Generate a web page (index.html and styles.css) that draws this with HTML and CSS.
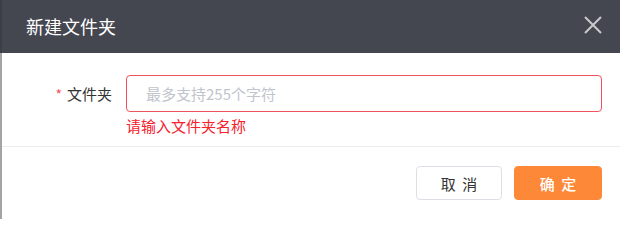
FILE: index.html
```html
<!DOCTYPE html>
<html lang="zh-CN">
<head>
<meta charset="utf-8">
<title>新建文件夹</title>
<link rel="stylesheet" href="styles.css">
</head>
<body>
<div class="dialog">
  <header class="dialog-header">
    <span class="dialog-title">新建文件夹</span>
    <button class="close-btn" aria-label="关闭">
      <svg width="20" height="20" viewBox="0 0 20 20"><path d="M2 2 L18 18 M18 2 L2 18" stroke="#c9cacd" stroke-width="2" fill="none"/></svg>
    </button>
  </header>
  <div class="dialog-main">
    <div class="dialog-body">
      <div class="form-row">
        <label class="form-label"><span class="req">*</span>文件夹</label>
        <div class="form-control">
          <input class="text-input" type="text" placeholder="最多支持255个字符">
          <div class="form-error">请输入文件夹名称</div>
        </div>
      </div>
    </div>
    <div class="dialog-footer">
      <button class="btn btn-default">取 消</button>
      <button class="btn btn-primary">确 定</button>
    </div>
  </div>
</div>
</body>
</html>
```
FILE: styles.css
```css
html, body {
  margin: 0;
  padding: 0;
  background: #ffffff;
}
body {
  width: 620px;
  height: 219px;
  overflow: hidden;
  font-family: "Noto Sans CJK SC", "Noto Sans", "Liberation Sans", sans-serif;
}
.dialog {
  display: flex;
  flex-direction: column;
  height: 219px;
}
.dialog-header {
  height: 53px;
  background: #454750;
  border-left: 2px solid #3c3e46;
  display: flex;
  align-items: center;
  justify-content: space-between;
  padding: 0 17px 0 24px;
  box-sizing: border-box;
}
.dialog-title {
  color: #ffffff;
  font-size: 18px;
  line-height: 24px;
  margin-top: -1px;
}
.close-btn {
  border: 0;
  background: transparent;
  padding: 0;
  width: 20px;
  height: 20px;
  margin-top: -4px;
  display: flex;
}
.dialog-main {
  flex: 1;
  border-left: 2px solid #a4a4a4;
  display: flex;
  flex-direction: column;
}
.dialog-body {
  padding: 22px 18px 0 0;
  height: 94px;
  box-sizing: border-box;
  border-bottom: 1px solid #ececef;
}
.form-row {
  display: flex;
  align-items: flex-start;
}
.form-label {
  width: 124px;
  box-sizing: border-box;
  padding-right: 14px;
  text-align: right;
  font-size: 15px;
  line-height: 37px;
  color: #333333;
  flex-shrink: 0;
}
.req {
  color: #f2535c;
  margin-right: 5px;
  font-size: 14px;
}
.form-control {
  flex: 1;
  display: flex;
  flex-direction: column;
}
.text-input {
  height: 37px;
  box-sizing: border-box;
  border: 1px solid #f0525d;
  border-radius: 4px;
  padding: 0 19px;
  font-family: inherit;
  font-size: 15px;
  color: #333;
  outline: none;
}
.text-input::placeholder {
  color: #c0c4cc;
}
.form-error {
  color: #f5222d;
  font-size: 15px;
  line-height: 18px;
  margin-top: 5px;
}
.dialog-footer {
  display: flex;
  justify-content: flex-end;
  gap: 12px;
  padding: 19px 18px 0 0;
}
.btn {
  height: 34px;
  box-sizing: border-box;
  border-radius: 4px;
  font-family: inherit;
  font-size: 15px;
  word-spacing: 3px;
  padding: 0;
  display: flex;
  align-items: center;
  justify-content: center;
}
.btn-default {
  width: 86px;
  border: 1px solid #dcdfe6;
  background: #ffffff;
  color: #333333;
}
.btn-primary {
  width: 88px;
  border: 1px solid #fd8837;
  background: #fd8837;
  color: #ffffff;
  font-weight: 500;
}
```
